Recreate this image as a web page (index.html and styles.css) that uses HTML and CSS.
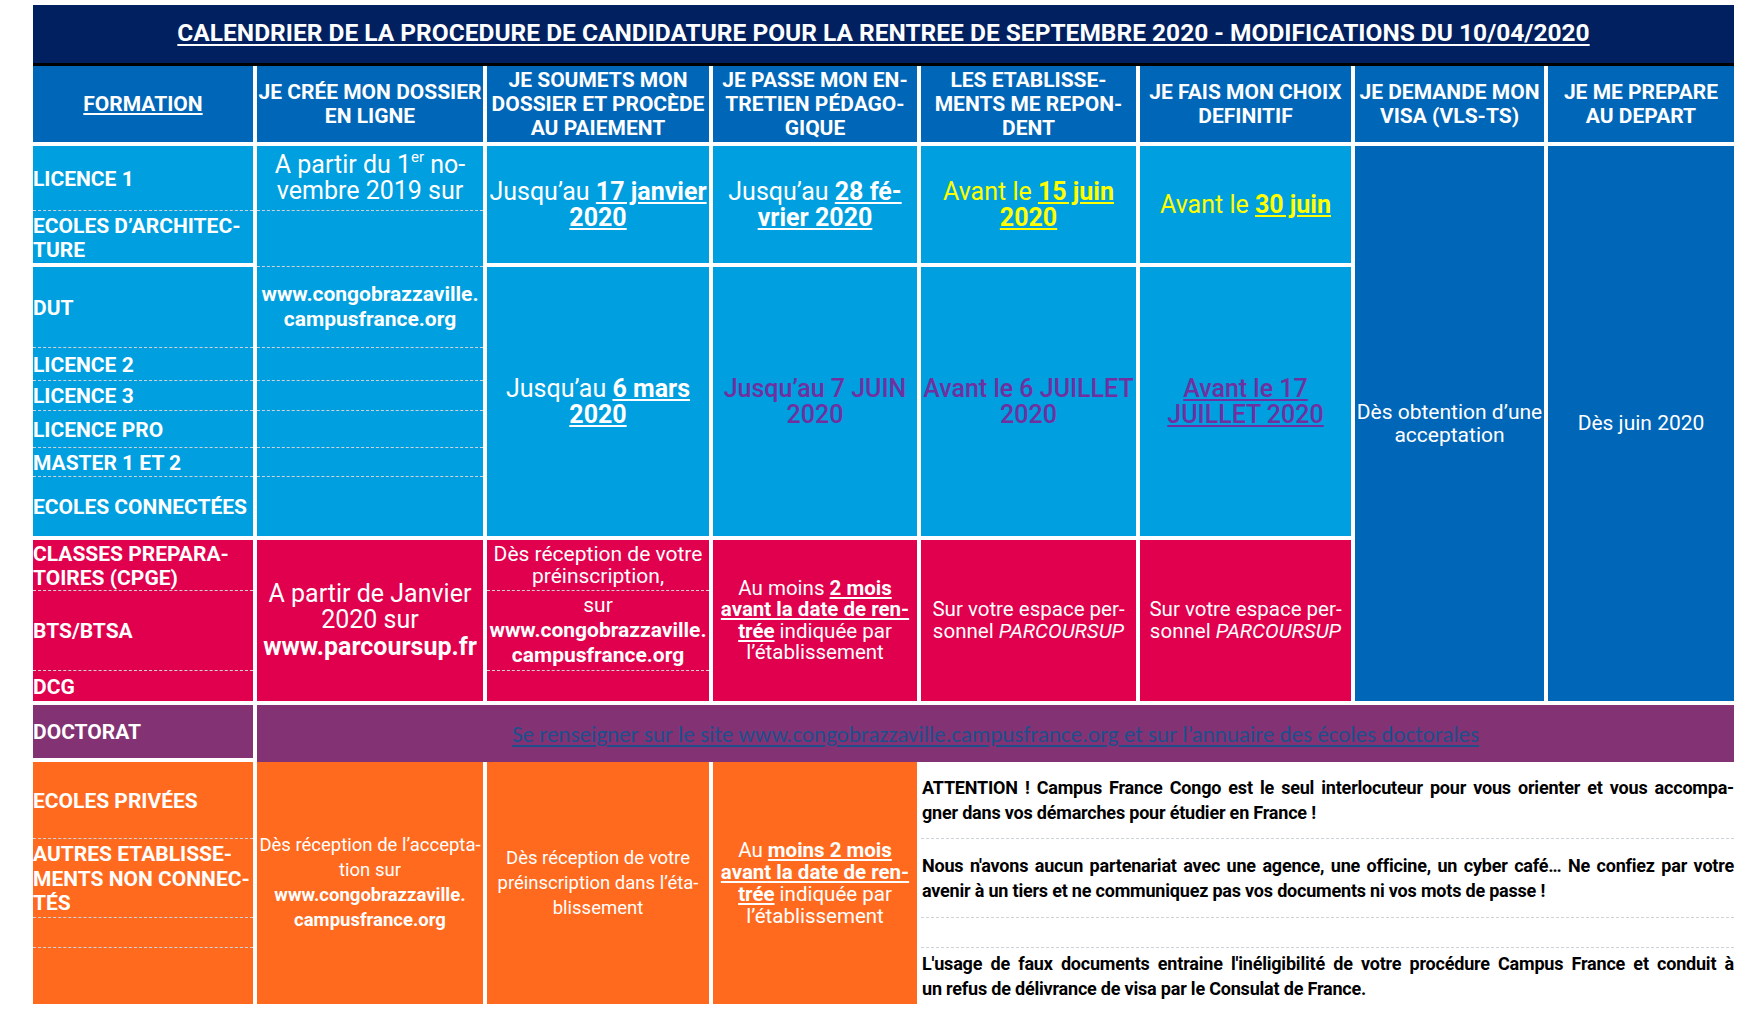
FILE: index.html
```html
<!DOCTYPE html>
<html lang="fr">
<head>
<meta charset="utf-8">
<title>Calendrier de la procédure de candidature</title>
<link rel="stylesheet" href="styles.css">
</head>
<body>
<main class="page">
  <div class="cal">
    <div class="title c-all r-title"><span class="title-text">CALENDRIER DE LA PROCEDURE DE CANDIDATURE POUR LA RENTREE DE SEPTEMBRE 2020 - MODIFICATIONS DU 10/04/2020</span></div>

    <div class="cell hd c1 r-head"><u>FORMATION</u></div>
    <div class="cell hd c2 r-head">JE CRÉE MON DOSSIER<br>EN LIGNE</div>
    <div class="cell hd c3 r-head">JE SOUMETS MON<br>DOSSIER ET PROCÈDE<br>AU PAIEMENT</div>
    <div class="cell hd c4 r-head">JE PASSE MON EN-<br>TRETIEN PÉDAGO-<br>GIQUE</div>
    <div class="cell hd c5 r-head">LES ETABLISSE-<br>MENTS ME REPON-<br>DENT</div>
    <div class="cell hd c6 r-head">JE FAIS MON CHOIX<br>DEFINITIF</div>
    <div class="cell hd c7 r-head">JE DEMANDE MON<br>VISA (VLS-TS)</div>
    <div class="cell hd c8 r-head">JE ME PREPARE<br>AU DEPART</div>

    <!-- Bloc A -->
    <div class="cell fm lb dash c1 r-l1">LICENCE 1</div>
    <div class="cell fm lb c1 r-arch">ECOLES D’ARCHITEC-<br>TURE</div>
    <div class="cell lb big dash c2 r-l1"><span>A partir du 1<sup>er</sup> no-<br>vembre 2019 sur</span></div>
    <div class="cell lb dash c2 r-arch-gap"></div>
    <div class="cell lb big c3 r-blockA"><span>Jusqu’au <b><u>17 janvier</u></b><br><b><u>2020</u></b></span></div>
    <div class="cell lb big c4 r-blockA"><span>Jusqu’au <b><u>28 fé-</u></b><br><b><u>vrier 2020</u></b></span></div>
    <div class="cell lb big yellow c5 r-blockA"><span>Avant le <b><u>15 juin</u></b><br><b><u>2020</u></b></span></div>
    <div class="cell lb big yellow c6 r-blockA"><span>Avant le <b><u>30 juin</u></b></span></div>
    <div class="cell db mid c7 r-visa"><span>Dès obtention d’une<br>acceptation</span></div>
    <div class="cell db mid c8 r-visa"><span>Dès juin 2020</span></div>

    <!-- Bloc B -->
    <div class="cell fm lb dash c1 r-dut">DUT</div>
    <div class="cell fm lb dash c1 r-l2">LICENCE 2</div>
    <div class="cell fm lb dash c1 r-l3">LICENCE 3</div>
    <div class="cell fm lb dash c1 r-lpro">LICENCE PRO</div>
    <div class="cell fm lb dash c1 r-m">MASTER 1 ET 2</div>
    <div class="cell fm lb c1 r-ec">ECOLES CONNECTÉES</div>
    <div class="cell lb url dash c2 r-dut"><span>www.congobrazzaville.<br>campusfrance.org</span></div>
    <div class="cell lb dash c2 r-l2"></div>
    <div class="cell lb dash c2 r-l3"></div>
    <div class="cell lb dash c2 r-lpro"></div>
    <div class="cell lb dash c2 r-m"></div>
    <div class="cell lb c2 r-ec"></div>
    <div class="cell lb big c3 r-blockB"><span>Jusqu’au <b><u>6 mars</u></b><br><b><u>2020</u></b></span></div>
    <div class="cell lb big purple c4 r-blockB"><span>Jusqu’au 7 JUIN<br>2020</span></div>
    <div class="cell lb big purple c5 r-blockB"><span>Avant le 6 JUILLET<br>2020</span></div>
    <div class="cell lb big purple c6 r-blockB"><span><u>Avant le 17</u><br><u>JUILLET 2020</u></span></div>

    <!-- Bloc C -->
    <div class="cell fm pk dash c1 r-cpge">CLASSES PREPARA-<br>TOIRES (CPGE)</div>
    <div class="cell fm pk dash c1 r-bts">BTS/BTSA</div>
    <div class="cell fm pk c1 r-dcg">DCG</div>
    <div class="cell pk lg c2 r-blockC"><span>A partir de Janvier<br>2020 sur<br><b>www.parcoursup.fr</b></span></div>
    <div class="cell pk sm dash c3 r-cpge"><span>Dès réception de votre<br>préinscription,</span></div>
    <div class="cell pk sm loose dash c3 r-bts"><span>sur<br><b>www.congobrazzaville.<br>campusfrance.org</b></span></div>
    <div class="cell pk c3 r-dcg"></div>
    <div class="cell pk sm tight c4 r-blockC"><span>Au moins <b><u>2 mois</u></b><br><b><u>avant la date de ren-</u></b><br><b><u>trée</u></b> indiquée par<br>l’établissement</span></div>
    <div class="cell pk sm tight c5 r-blockC"><span>Sur votre espace per-<br>sonnel <i>PARCOURSUP</i></span></div>
    <div class="cell pk sm tight c6 r-blockC"><span>Sur votre espace per-<br>sonnel <i>PARCOURSUP</i></span></div>

    <!-- Doctorat -->
    <div class="cell fm pu c1 r-doc">DOCTORAT</div>
    <div class="cell pu doc c-wide r-docx"><a class="doc-link" href="#">Se renseigner sur le site www.congobrazzaville.campusfrance.org et sur l’annuaire des écoles doctorales</a></div>

    <!-- Bloc D -->
    <div class="cell fm or dash c1 r-ep">ECOLES PRIVÉES</div>
    <div class="cell fm or dash c1 r-aut">AUTRES ETABLISSE-<br>MENTS NON CONNEC-<br>TÉS</div>
    <div class="cell or dash c1 r-e1"></div>
    <div class="cell or c1 r-e2"></div>
    <div class="cell or orx c2 r-blockD"><span>Dès réception de l’accepta-<br>tion sur<br><b class="or-url">www.congobrazzaville.<br>campusfrance.org</b></span></div>
    <div class="cell or orx c3 r-blockD"><span>Dès réception de votre<br>préinscription dans l’éta-<br>blissement</span></div>
    <div class="cell or orx orw c4 r-blockD"><span>Au <b><u>moins 2 mois</u></b><br><b><u>avant la date de ren-</u></b><br><b><u>trée</u></b> indiquée par<br>l’établissement</span></div>

    <div class="note dash c-note r-ep">
      <span class="ln">ATTENTION ! Campus France Congo est le seul interlocuteur pour vous orienter et vous accompa-</span>
      <span class="ln last">gner dans vos démarches pour étudier en France !</span>
    </div>
    <div class="note dash c-note r-aut">
      <span class="ln">Nous n'avons aucun partenariat avec une agence, une officine, un cyber café… Ne confiez par votre</span>
      <span class="ln last">avenir à un tiers et ne communiquez pas vos documents ni vos mots de passe !</span>
    </div>
    <div class="note dash c-note r-e1"></div>
    <div class="note c-note r-e2">
      <span class="ln">L'usage de faux documents entraine l'inéligibilité de votre procédure Campus France et conduit à</span>
      <span class="ln last">un refus de délivrance de visa par le Consulat de France.</span>
    </div>
  </div>
</main>
</body>
</html>
```

FILE: styles.css
```css
* {
  box-sizing: border-box;
}

html,
body {
  margin: 0;
  padding: 0;
  background: #ffffff;
}

body {
  font-family: Roboto, "Noto Sans", "Liberation Sans", sans-serif;
  color: #ffffff;
}

.page {
  padding: 5px 0 0 33px;
}

.cal {
  display: grid;
  width: 1701px;
  grid-template-columns: 220px 226px 222px 204px 215px 211px 189px 186px;
  column-gap: 4px;
  grid-template-rows:
    61px 76px 4px
    65px 52px 4px
    81px 33px 30px 37px 29px 59px 4px
    51px 80px 30px 4px
    53px 4px
    77px 79px 30px 56px;
}

/* ---------- placement ---------- */
.c1 { grid-column: 1; }
.c2 { grid-column: 2; }
.c3 { grid-column: 3; }
.c4 { grid-column: 4; }
.c5 { grid-column: 5; }
.c6 { grid-column: 6; }
.c7 { grid-column: 7; }
.c8 { grid-column: 8; }
.c-all { grid-column: 1 / -1; }
.c-wide { grid-column: 2 / 9; }
.c-note { grid-column: 5 / 9; }

.r-title { grid-row: 1; }
.r-head { grid-row: 2; }
.r-l1 { grid-row: 4; }
.r-arch { grid-row: 5; }
.r-arch-gap { grid-row: 5 / 7; }
.r-blockA { grid-row: 4 / 6; }
.r-visa { grid-row: 4 / 17; }
.r-dut { grid-row: 7; }
.r-l2 { grid-row: 8; }
.r-l3 { grid-row: 9; }
.r-lpro { grid-row: 10; }
.r-m { grid-row: 11; }
.r-ec { grid-row: 12; }
.r-blockB { grid-row: 7 / 13; }
.r-cpge { grid-row: 14; }
.r-bts { grid-row: 15; }
.r-dcg { grid-row: 16; }
.r-blockC { grid-row: 14 / 17; }
.r-doc { grid-row: 18; }
.r-docx { grid-row: 18 / 20; }
.r-ep { grid-row: 20; }
.r-aut { grid-row: 21; }
.r-e1 { grid-row: 22; }
.r-e2 { grid-row: 23; }
.r-blockD { grid-row: 20 / 24; }

/* ---------- title ---------- */
.title {
  background: #002060;
  border-bottom: 3px solid #000000;
  display: flex;
  align-items: center;
  justify-content: center;
  padding-bottom: 4px;
}

.title-text {
  font-size: 24.5px;
  font-weight: 700;
  text-decoration: underline;
  text-decoration-thickness: 2px;
  text-underline-offset: 3px;
  white-space: nowrap;
}

/* ---------- cells ---------- */
.cell {
  display: flex;
  align-items: center;
  justify-content: center;
  text-align: center;
  white-space: nowrap;
}

.dash {
  border-bottom: 1px dashed #cdd3d6;
}

.lb { background: #009fdf; }
.db { background: #0066b8; }
.pk { background: #e0004d; }
.pu { background: #833273; }
.or { background: #ff6a1e; }

.hd {
  background: #0066b8;
  font-size: 21px;
  font-weight: 700;
  line-height: 24px;
}

.fm {
  justify-content: flex-start;
  text-align: left;
  padding-left: 0;
  padding-top: 2px;
  font-size: 21px;
  font-weight: 700;
  line-height: 24.5px;
}

u {
  text-underline-offset: 2px;
}

sup {
  font-size: 0.6em;
  line-height: 0;
  vertical-align: 0.75em;
}

.big {
  font-size: 25px;
  line-height: 26px;
}

.lg {
  font-size: 25px;
  line-height: 26.5px;
}

.mid {
  font-size: 21px;
  line-height: 22.5px;
}

.sm {
  font-size: 21px;
  line-height: 22.5px;
}

.sm.loose {
  line-height: 25px;
}

.sm.tight {
  font-size: 20.5px;
  line-height: 21.5px;
}

.url {
  font-size: 21px;
  font-weight: 700;
  line-height: 25.5px;
}

.yellow { color: #ffff00; }

.purple {
  color: #7030a0;
  font-weight: 500;
}

.doc {
  font-family: Carlito, "Open Sans", "Noto Sans", sans-serif;
  font-size: 23px;
}

.doc-link {
  color: #1c4f8c;
  text-decoration: underline;
  text-underline-offset: 3px;
}

.orx {
  font-size: 18.5px;
  line-height: 25px;
}

.orx.orw {
  font-size: 20.5px;
  line-height: 22px;
}

/* ---------- notes ---------- */
.note {
  background: #ffffff;
  color: #000000;
  display: flex;
  flex-direction: column;
  justify-content: center;
  padding-left: 1px;
  font-size: 18px;
  font-weight: 700;
  letter-spacing: -0.2px;
  line-height: 25px;
}

.ln {
  display: block;
  white-space: nowrap;
  text-align: justify;
  text-align-last: justify;
}

.ln.last {
  text-align-last: left;
}
```
